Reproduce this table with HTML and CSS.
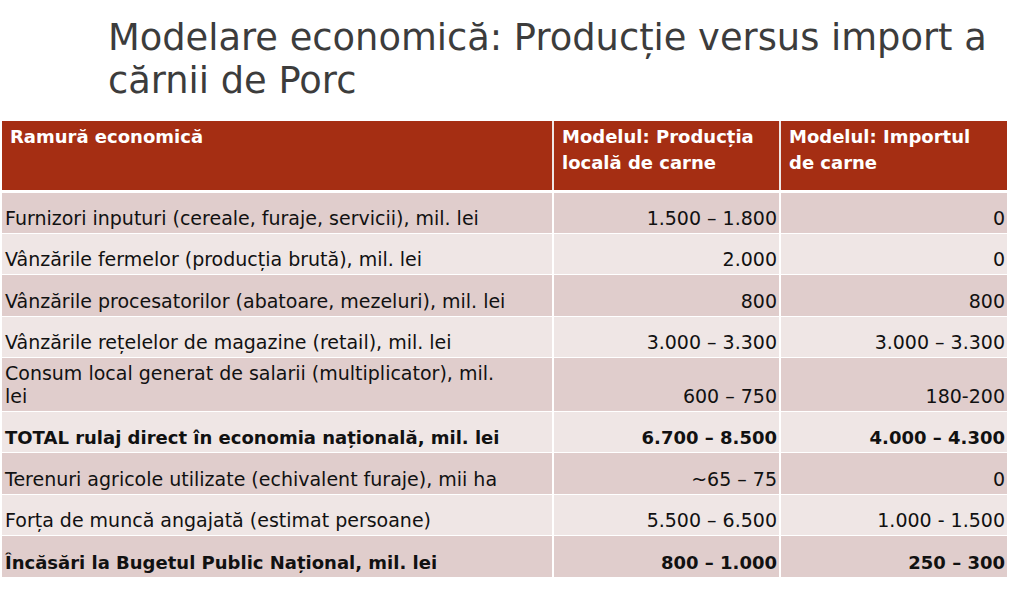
FILE: index.html
```html
<!DOCTYPE html>
<html lang="ro">
<head>
<meta charset="utf-8">
<title>Modelare economică</title>
<link rel="stylesheet" href="styles.css">
</head>
<body>
<div class="slide">
  <h1 class="title">Modelare economică: Producție versus import a cărnii de Porc</h1>
  <table class="data">
    <colgroup>
      <col class="c1"><col class="c2"><col class="c3">
    </colgroup>
    <thead>
      <tr>
        <th class="h1c">Ramură economică</th>
        <th>Modelul: Producția locală de carne</th>
        <th class="h3c">Modelul: Importul de carne</th>
      </tr>
    </thead>
    <tbody>
      <tr class="dark"><td>Furnizori inputuri (cereale, furaje, servicii), mil. lei</td><td class="num">1.500 – 1.800</td><td class="num">0</td></tr>
      <tr class="light"><td>Vânzările fermelor (producția brută), mil. lei</td><td class="num">2.000</td><td class="num">0</td></tr>
      <tr class="dark"><td>Vânzările procesatorilor (abatoare, mezeluri), mil. lei</td><td class="num">800</td><td class="num">800</td></tr>
      <tr class="light"><td>Vânzările rețelelor de magazine (retail), mil. lei</td><td class="num">3.000 – 3.300</td><td class="num">3.000 – 3.300</td></tr>
      <tr class="dark tall"><td class="wrap">Consum local generat de salarii (multiplicator), mil. lei</td><td class="num">600 – 750</td><td class="num">180-200</td></tr>
      <tr class="light bold"><td>TOTAL rulaj direct în economia națională, mil. lei</td><td class="num">6.700 – 8.500</td><td class="num">4.000 – 4.300</td></tr>
      <tr class="dark"><td>Terenuri agricole utilizate (echivalent furaje), mii ha</td><td class="num">~65 – 75</td><td class="num">0</td></tr>
      <tr class="light"><td>Forța de muncă angajată (estimat persoane)</td><td class="num">5.500 – 6.500</td><td class="num">1.000 - 1.500</td></tr>
      <tr class="dark bold"><td>Încăsări la Bugetul Public Național, mil. lei</td><td class="num">800 – 1.000</td><td class="num">250 – 300</td></tr>
    </tbody>
  </table>
</div>
</body>
</html>
```
FILE: styles.css
```css
html, body {
  margin: 0;
  padding: 0;
  background: #ffffff;
}
.slide {
  width: 1022px;
  height: 591px;
  overflow: hidden;
  font-family: "DejaVu Sans", "Liberation Sans", sans-serif;
}
.title {
  margin: 0;
  padding: 16px 0 0 108px;
  width: 900px;
  font-size: 36.8px;
  line-height: 43px;
  font-weight: normal;
  color: #3c3c3c;
  height: 91px;
}
.data {
  margin: 14px 0 0 2px;
  width: 1005px;
  border-collapse: collapse;
  table-layout: fixed;
  font-size: 19px;
  color: #111111;
}
.c1 { width: 551px; }
.c2 { width: 227px; }
.c3 { width: 227px; }
.data th {
  background: #a52e13;
  color: #ffffff;
  font-weight: bold;
  font-size: 18px;
  text-align: left;
  vertical-align: top;
  height: 70px;
  padding: 3px 8px 0 8px;
  line-height: 26px;
  box-sizing: border-box;
  border-left: 2px solid #f0e6e4;
  border-bottom: 3px solid #ffffff;
}
.data th.h1c { border-left: none; }
.data th.h3c { padding-right: 30px; }
.data td {
  height: 37.4px;
  padding: 0 2px 3px 3px;
  line-height: 23px;
  vertical-align: bottom;
  border-top: 1px solid #ffffff;
  border-left: 2px solid #ffffff;
}
.data td:first-child { border-left: none; }
.data tr.tall td { height: 50px; }
.data td.wrap { padding-right: 40px; }
.data td.num { text-align: right; }
.dark td { background: #e0cdcc; }
.light td { background: #efe6e5; }
.bold td { font-weight: bold; font-size: 18px; }
```
